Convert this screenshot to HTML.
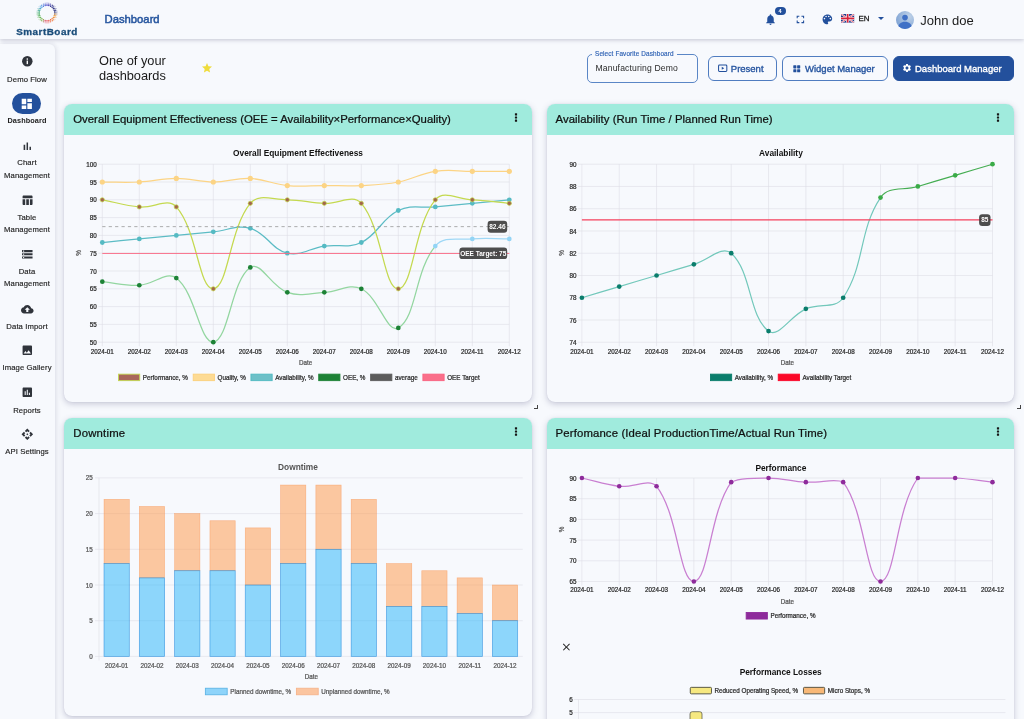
<!DOCTYPE html>
<html lang="en"><head><meta charset="utf-8"><title>SmartBoard - Dashboard</title>
<style>
*{box-sizing:border-box}
html,body{margin:0;padding:0}
body{width:1024px;height:719px;overflow:hidden;background:#f7f9fd;font-family:"Liberation Sans",sans-serif;color:#222;position:relative}
#root{position:absolute;left:0;top:0;width:1024px;height:719px;overflow:hidden;will-change:transform}
.abs{position:absolute}
#hdr{position:absolute;left:0;top:0;width:1024px;height:39px;background:#f7f9fd;box-shadow:0 1px 4px rgba(60,60,100,.28);z-index:5}
#side{position:absolute;left:0;top:43.6px;width:54.5px;height:680px;background:#f7f9fd;border-radius:0 6px 0 0;box-shadow:1px 0 5px rgba(60,60,100,.16);z-index:4}
.sb{position:absolute;left:0;width:54px;text-align:center;font-size:7.7px;line-height:13px;color:#222;letter-spacing:.1px;-webkit-text-stroke:.15px #222}
.sbi{position:absolute;left:0;width:54px;text-align:center}
.card{position:absolute;background:#f7f9fd;border-radius:8px;box-shadow:0 2px 6px rgba(60,60,110,.26),0 0 1px rgba(60,60,110,.2);overflow:hidden}
.ch{position:absolute;left:0;top:0;right:0;height:31px;background:#a0ebdd}
.ct{position:absolute;left:9px;top:0;line-height:30px;font-size:11.35px;color:#101010;white-space:nowrap;-webkit-text-stroke:.24px #101010}
.dots{position:absolute;left:449.7px;top:9px}
.btn{position:absolute;top:56px;height:25px;border:1px solid #4f7cc0;border-radius:6px;color:#25549f;font-size:9.5px;line-height:23px;white-space:nowrap;-webkit-text-stroke:.35px #25549f}
.med{-webkit-text-stroke:.3px currentColor}
svg{display:block;overflow:visible}
svg text{font-family:"Liberation Sans",sans-serif}
</style></head><body><div id="root">

<div id="hdr">
  <div class="abs" style="left:35px;top:1px"><svg width="24" height="24" viewBox="0 0 24 24"><circle cx="12.00" cy="4.30" r="0.72" fill="rgb(70, 60, 200)" opacity="1.0"/><circle cx="13.84" cy="4.52" r="0.72" fill="rgb(54, 50, 172)" opacity="1.0"/><circle cx="15.58" cy="5.18" r="0.72" fill="rgb(39, 39, 145)" opacity="1.0"/><circle cx="17.11" cy="6.24" r="0.72" fill="rgb(25, 30, 120)" opacity="1.0"/><circle cx="18.34" cy="7.63" r="0.72" fill="rgb(25, 30, 117)" opacity="1.0"/><circle cx="19.20" cy="9.27" r="0.72" fill="rgb(25, 30, 114)" opacity="1.0"/><circle cx="19.64" cy="11.07" r="0.72" fill="rgb(25, 30, 110)" opacity="1.0"/><circle cx="19.64" cy="12.93" r="0.72" fill="rgb(153, 102, 62)" opacity="1.0"/><circle cx="19.20" cy="14.73" r="0.72" fill="rgb(240, 144, 31)" opacity="1.0"/><circle cx="18.34" cy="16.37" r="0.72" fill="rgb(239, 128, 34)" opacity="1.0"/><circle cx="17.11" cy="17.76" r="0.72" fill="rgb(239, 113, 37)" opacity="1.0"/><circle cx="15.58" cy="18.82" r="0.72" fill="rgb(238, 98, 44)" opacity="1.0"/><circle cx="13.84" cy="19.48" r="0.72" fill="rgb(236, 88, 68)" opacity="1.0"/><circle cx="12.00" cy="19.70" r="0.72" fill="rgb(234, 78, 92)" opacity="1.0"/><circle cx="10.16" cy="19.48" r="0.72" fill="rgb(215, 87, 102)" opacity="1.0"/><circle cx="8.42" cy="18.82" r="0.72" fill="rgb(153, 148, 75)" opacity="1.0"/><circle cx="6.89" cy="17.76" r="0.72" fill="rgb(110, 178, 62)" opacity="1.0"/><circle cx="5.66" cy="16.37" r="0.72" fill="rgb(90, 174, 67)" opacity="1.0"/><circle cx="4.80" cy="14.73" r="0.72" fill="rgb(70, 171, 72)" opacity="1.0"/><circle cx="4.36" cy="12.93" r="0.72" fill="rgb(50, 167, 77)" opacity="1.0"/><circle cx="4.36" cy="11.07" r="0.72" fill="rgb(45, 164, 103)" opacity="1.0"/><circle cx="4.80" cy="9.27" r="0.72" fill="rgb(54, 163, 149)" opacity="1.0"/><circle cx="5.66" cy="7.63" r="0.72" fill="rgb(63, 161, 195)" opacity="1.0"/><circle cx="6.89" cy="6.24" r="0.72" fill="rgb(70, 152, 228)" opacity="1.0"/><circle cx="8.42" cy="5.18" r="0.72" fill="rgb(70, 122, 218)" opacity="1.0"/><circle cx="10.16" cy="4.52" r="0.72" fill="rgb(70, 91, 209)" opacity="1.0"/><circle cx="12.00" cy="3.00" r="0.62" fill="rgb(70, 60, 200)" opacity="0.95"/><circle cx="13.87" cy="3.20" r="0.62" fill="rgb(56, 51, 176)" opacity="0.95"/><circle cx="15.66" cy="3.78" r="0.62" fill="rgb(43, 42, 152)" opacity="0.95"/><circle cx="17.29" cy="4.72" r="0.62" fill="rgb(30, 33, 128)" opacity="0.95"/><circle cx="18.69" cy="5.98" r="0.62" fill="rgb(25, 30, 118)" opacity="0.95"/><circle cx="19.79" cy="7.50" r="0.62" fill="rgb(25, 30, 116)" opacity="0.95"/><circle cx="20.56" cy="9.22" r="0.62" fill="rgb(25, 30, 113)" opacity="0.95"/><circle cx="20.95" cy="11.06" r="0.62" fill="rgb(25, 30, 110)" opacity="0.95"/><circle cx="20.95" cy="12.94" r="0.62" fill="rgb(143, 96, 66)" opacity="0.95"/><circle cx="20.56" cy="14.78" r="0.62" fill="rgb(240, 147, 31)" opacity="0.95"/><circle cx="19.79" cy="16.50" r="0.62" fill="rgb(239, 133, 33)" opacity="0.95"/><circle cx="18.69" cy="18.02" r="0.62" fill="rgb(239, 120, 36)" opacity="0.95"/><circle cx="17.29" cy="19.28" r="0.62" fill="rgb(238, 107, 39)" opacity="0.95"/><circle cx="15.66" cy="20.22" r="0.62" fill="rgb(237, 96, 50)" opacity="0.95"/><circle cx="13.87" cy="20.80" r="0.62" fill="rgb(235, 86, 72)" opacity="0.95"/><circle cx="12.00" cy="21.00" r="0.62" fill="rgb(234, 78, 92)" opacity="0.95"/><circle cx="10.13" cy="20.80" r="0.62" fill="rgb(223, 79, 106)" opacity="0.95"/><circle cx="8.34" cy="20.22" r="0.62" fill="rgb(169, 132, 82)" opacity="0.95"/><circle cx="6.71" cy="19.28" r="0.62" fill="rgb(119, 180, 60)" opacity="0.95"/><circle cx="5.31" cy="18.02" r="0.62" fill="rgb(101, 176, 65)" opacity="0.95"/><circle cx="4.21" cy="16.50" r="0.62" fill="rgb(84, 173, 69)" opacity="0.95"/><circle cx="3.44" cy="14.78" r="0.62" fill="rgb(66, 170, 73)" opacity="0.95"/><circle cx="3.05" cy="12.94" r="0.62" fill="rgb(49, 167, 78)" opacity="0.95"/><circle cx="3.05" cy="11.06" r="0.62" fill="rgb(44, 164, 100)" opacity="0.95"/><circle cx="3.44" cy="9.22" r="0.62" fill="rgb(52, 163, 140)" opacity="0.95"/><circle cx="4.21" cy="7.50" r="0.62" fill="rgb(60, 162, 180)" opacity="0.95"/><circle cx="5.31" cy="5.98" r="0.62" fill="rgb(68, 160, 220)" opacity="0.95"/><circle cx="6.71" cy="4.72" r="0.62" fill="rgb(70, 140, 224)" opacity="0.95"/><circle cx="8.34" cy="3.78" r="0.62" fill="rgb(70, 113, 216)" opacity="0.95"/><circle cx="10.13" cy="3.20" r="0.62" fill="rgb(70, 87, 208)" opacity="0.95"/><circle cx="12.00" cy="1.80" r="0.45" fill="rgb(70, 60, 200)" opacity="0.6"/><circle cx="13.87" cy="1.97" r="0.45" fill="rgb(58, 52, 179)" opacity="0.6"/><circle cx="15.68" cy="2.49" r="0.45" fill="rgb(46, 44, 158)" opacity="0.6"/><circle cx="17.37" cy="3.33" r="0.45" fill="rgb(34, 36, 136)" opacity="0.6"/><circle cx="18.87" cy="4.46" r="0.45" fill="rgb(25, 30, 119)" opacity="0.6"/><circle cx="20.14" cy="5.85" r="0.45" fill="rgb(25, 30, 117)" opacity="0.6"/><circle cx="21.13" cy="7.45" r="0.45" fill="rgb(25, 30, 115)" opacity="0.6"/><circle cx="21.81" cy="9.21" r="0.45" fill="rgb(25, 30, 112)" opacity="0.6"/><circle cx="22.16" cy="11.06" r="0.45" fill="rgb(25, 30, 110)" opacity="0.6"/><circle cx="22.16" cy="12.94" r="0.45" fill="rgb(136, 92, 69)" opacity="0.6"/><circle cx="21.81" cy="14.79" r="0.45" fill="rgb(240, 149, 30)" opacity="0.6"/><circle cx="21.13" cy="16.55" r="0.45" fill="rgb(239, 137, 33)" opacity="0.6"/><circle cx="20.14" cy="18.15" r="0.45" fill="rgb(239, 125, 35)" opacity="0.6"/><circle cx="18.87" cy="19.54" r="0.45" fill="rgb(239, 114, 37)" opacity="0.6"/><circle cx="17.37" cy="20.67" r="0.45" fill="rgb(238, 102, 40)" opacity="0.6"/><circle cx="15.68" cy="21.51" r="0.45" fill="rgb(237, 93, 55)" opacity="0.6"/><circle cx="13.87" cy="22.03" r="0.45" fill="rgb(235, 85, 74)" opacity="0.6"/><circle cx="12.00" cy="22.20" r="0.45" fill="rgb(234, 78, 92)" opacity="0.6"/><circle cx="10.13" cy="22.03" r="0.45" fill="rgb(229, 73, 109)" opacity="0.6"/><circle cx="8.32" cy="21.51" r="0.45" fill="rgb(182, 119, 88)" opacity="0.6"/><circle cx="6.63" cy="20.67" r="0.45" fill="rgb(134, 166, 66)" opacity="0.6"/><circle cx="5.13" cy="19.54" r="0.45" fill="rgb(109, 178, 63)" opacity="0.6"/><circle cx="3.86" cy="18.15" r="0.45" fill="rgb(94, 175, 67)" opacity="0.6"/><circle cx="2.87" cy="16.55" r="0.45" fill="rgb(79, 172, 70)" opacity="0.6"/><circle cx="2.19" cy="14.79" r="0.45" fill="rgb(63, 169, 74)" opacity="0.6"/><circle cx="1.84" cy="12.94" r="0.45" fill="rgb(48, 166, 78)" opacity="0.6"/><circle cx="1.84" cy="11.06" r="0.45" fill="rgb(44, 164, 98)" opacity="0.6"/><circle cx="2.19" cy="9.21" r="0.45" fill="rgb(51, 163, 133)" opacity="0.6"/><circle cx="2.87" cy="7.45" r="0.45" fill="rgb(58, 162, 168)" opacity="0.6"/><circle cx="3.86" cy="5.85" r="0.45" fill="rgb(65, 161, 204)" opacity="0.6"/><circle cx="5.13" cy="4.46" r="0.45" fill="rgb(70, 154, 228)" opacity="0.6"/><circle cx="6.63" cy="3.33" r="0.45" fill="rgb(70, 131, 221)" opacity="0.6"/><circle cx="8.32" cy="2.49" r="0.45" fill="rgb(70, 107, 214)" opacity="0.6"/><circle cx="10.13" cy="1.97" r="0.45" fill="rgb(70, 84, 207)" opacity="0.6"/></svg></div>
  <div class="abs" style="left:15px;top:26px;width:64px;text-align:center;font-weight:bold;font-size:9.9px;line-height:12px;color:#1a4d7a;letter-spacing:.5px;-webkit-text-stroke:.32px #1a4d7a">SmartBoard</div>
  <div class="abs" style="left:104.6px;top:12px;font-size:11.25px;line-height:14px;color:#27569f;-webkit-text-stroke:.5px #27569f">Dashboard</div>
  <div class="abs" style="left:764px;top:12.5px"><svg width="13" height="13" viewBox="0 0 24 24"><path fill="#23509c" d="M12 22c1.1 0 2-.9 2-2h-4c0 1.1.89 2 2 2zm6-6v-5c0-3.07-1.64-5.64-4.5-6.32V4c0-.83-.67-1.5-1.5-1.5s-1.5.67-1.5 1.5v.68C7.63 5.36 6 7.92 6 11v5l-2 2v1h16v-1l-2-2z"/></svg></div>
  <div class="abs" style="left:774.5px;top:7.4px;width:11px;height:8px;border-radius:4px;background:#23509c;color:#fff;font-size:5.5px;line-height:8px;text-align:center;font-weight:bold">4</div>
  <div class="abs" style="left:793.6px;top:12.8px"><svg width="12.8" height="12.8" viewBox="0 0 24 24"><path fill="#23509c" d="M7 14H5v5h5v-2H7v-3zm-2-4h2V7h3V5H5v5zm12 7h-3v2h5v-5h-2v3zM14 5v2h3v3h2V5h-5z"/></svg></div>
  <div class="abs" style="left:820.7px;top:12.6px"><svg width="12.8" height="12.8" viewBox="0 0 24 24"><path fill="#23509c" d="M12 3c-4.97 0-9 4.03-9 9s4.03 9 9 9c.83 0 1.5-.67 1.5-1.5 0-.39-.15-.74-.39-1.01-.23-.26-.38-.61-.38-.99 0-.83.67-1.5 1.5-1.5H16c2.76 0 5-2.24 5-5 0-4.42-4.03-8-9-8zm-5.500 9c-.83 0-1.500-.67-1.500-1.500S5.670 9 6.500 9 8 9.670 8 10.500 7.330 12 6.500 12zm3-4C8.670 8 8 7.330 8 6.500S8.670 5 9.500 5s1.500.67 1.500 1.500S10.330 8 9.500 8zm5 0c-.83 0-1.500-.67-1.500-1.500S13.670 5 14.500 5s1.500.67 1.500 1.500S15.330 8 14.500 8zm3 4c-.83 0-1.500-.67-1.500-1.500S16.670 9 17.500 9s1.500.67 1.500 1.500-.67 1.500-1.500 1.500z"/></svg></div>
  <div class="abs" style="left:841px;top:13.9px"><svg width="13.4" height="8.8" viewBox="0 0 60 40" preserveAspectRatio="none"><defs><clipPath id="fk"><rect width="60" height="40" rx="3"/></clipPath></defs><g clip-path="url(#fk)"><rect width="60" height="40" fill="#1f3a8a"/><path d="M0 0L60 40M60 0L0 40" stroke="#fff" stroke-width="8"/><path d="M0 0L60 40M60 0L0 40" stroke="#d8203a" stroke-width="3"/><path d="M30 0V40M0 20H60" stroke="#fff" stroke-width="13"/><path d="M30 0V40M0 20H60" stroke="#d8203a" stroke-width="7.5"/></g></svg></div>
  <div class="abs" style="left:858.5px;top:13px;font-size:7.9px;line-height:11px;color:#222;-webkit-text-stroke:.3px #222">EN</div>
  <div class="abs" style="left:878px;top:17px;width:0;height:0;border-left:3px solid transparent;border-right:3px solid transparent;border-top:3.2px solid #23509c"></div>
  <div class="abs" style="left:896.2px;top:10.8px"><svg width="18" height="18" viewBox="0 0 36 36"><defs><clipPath id="avc"><circle cx="18" cy="18" r="18"/></clipPath><radialGradient id="avg" cx="0.72" cy="0.3" r="0.8"><stop offset="0" stop-color="#bfd2e8"/><stop offset="1" stop-color="#7fa3d4"/></radialGradient></defs><circle cx="18" cy="18" r="18" fill="url(#avg)"/><g clip-path="url(#avc)"><circle cx="18" cy="13.200" r="5.600" fill="#3f70c6"/><path d="M3.500 37c0-11 6.500-15.500 14.500-15.500s14.500 4.500 14.500 15.500z" fill="#3f70c6"/></g></svg></div>
  <div class="abs" style="left:920.3px;top:12.6px;font-size:13px;line-height:16px;color:#1c1c1c">John doe</div>
</div>
<div id="side">
<div class="abs" style="left:20.5px;top:11.9px"><svg width="12.6" height="12.6" viewBox="0 0 24 24"><circle cx="12" cy="12" r="10" fill="#30343b"/><rect x="10.700" y="10.600" width="2.600" height="6.800" fill="#fff"/><rect x="10.700" y="6.400" width="2.600" height="2.600" fill="#fff"/></svg></div>
<div class="sb" style="top:29.4px;">Demo Flow</div>
<div class="abs" style="left:12px;top:49.5px;width:29px;height:21px;border-radius:11px;background:#23509c"></div>
<div class="abs" style="left:20.1px;top:53.2px"><svg width="13.6" height="13.6" viewBox="0 0 24 24"><path fill="#fff" d="M3 13h8V3H3v10zm0 8h8v-6H3v6zm10 0h8V11h-8v10zm0-18v6h8V3h-8z"/></svg></div>
<div class="sb" style="top:70.3px;font-weight:bold;font-size:7.3px;-webkit-text-stroke:0;">Dashboard</div>
<div class="abs" style="left:20.5px;top:96.0px"><svg width="12.6" height="12.6" viewBox="0 0 24 24"><path fill="#30343b" d="M5 9.2h3V19H5V9.2zM10.6 5h2.8v14h-2.8V5zm5.6 8H19v6h-2.8v-6z"/></svg></div>
<div class="sb" style="top:112.8px;">Chart</div>
<div class="sb" style="top:125.9px;">Management</div>
<div class="abs" style="left:20.5px;top:150.3px"><svg width="12.6" height="12.6" viewBox="0 0 24 24"><path fill="#30343b" d="M10 10.02h5V21h-5zM17 21h3c1.1 0 2-.9 2-2v-9h-5v11zm3-18H5c-1.1 0-2 .9-2 2v3h19V5c0-1.1-.9-2-2-2zM3 19c0 1.1.9 2 2 2h3V10H3v9z"/></svg></div>
<div class="sb" style="top:167.0px;">Table</div>
<div class="sb" style="top:179.8px;">Management</div>
<div class="abs" style="left:20.5px;top:204.3px"><svg width="12.6" height="12.6" viewBox="0 0 24 24"><path fill="#30343b" d="M2 20h20v-4H2v4zm2-3h2v2H4v-2zM2 4v4h20V4H2zm4 3H4V5h2v2zm-4 7h20v-4H2v4zm2-3h2v2H4v-2z"/></svg></div>
<div class="sb" style="top:221.8px;">Data</div>
<div class="sb" style="top:233.8px;">Management</div>
<div class="abs" style="left:20.5px;top:259.3px"><svg width="12.6" height="12.6" viewBox="0 0 24 24"><path fill="#30343b" d="M19.35 10.04C18.67 6.59 15.64 4 12 4 9.11 4 6.6 5.64 5.35 8.04 2.34 8.36 0 10.91 0 14c0 3.31 2.69 6 6 6h13c2.76 0 5-2.24 5-5 0-2.64-2.05-4.78-4.65-4.96zM14 13v4h-4v-4H7l5-5 5 5h-3z"/></svg></div>
<div class="sb" style="top:276.2px;">Data Import</div>
<div class="abs" style="left:20.5px;top:300.3px"><svg width="12.6" height="12.6" viewBox="0 0 24 24"><path fill="#30343b" d="M21 19V5c0-1.1-.9-2-2-2H5c-1.1 0-2 .9-2 2v14c0 1.1.9 2 2 2h14c1.1 0 2-.9 2-2zM8.5 13.5l2.5 3.01L14.5 12l4.5 6H5l3.5-4.5z"/></svg></div>
<div class="sb" style="top:317.9px;">Image Gallery</div>
<div class="abs" style="left:20.5px;top:342.5px"><svg width="12.6" height="12.6" viewBox="0 0 24 24"><path fill="#30343b" d="M19 3H5c-1.1 0-2 .9-2 2v14c0 1.1.9 2 2 2h14c1.1 0 2-.9 2-2V5c0-1.1-.9-2-2-2zM9 17H7v-7h2v7zm4 0h-2V7h2v10zm4 0h-2v-4h2v4z"/></svg></div>
<div class="sb" style="top:360.0px;">Reports</div>
<div class="abs" style="left:20.5px;top:384.3px"><svg width="12.6" height="12.6" viewBox="0 0 24 24"><path fill="#30343b" d="M14 12l-2 2-2-2 2-2 2 2zm-2-6l2.12 2.12 2.5-2.5L12 1 7.38 5.62l2.5 2.5L12 6zm-6 6l2.12-2.12-2.5-2.5L1 12l4.62 4.62 2.5-2.5L6 12zm12 0l-2.12 2.12 2.5 2.5L23 12l-4.62-4.62-2.5 2.5L18 12zm-6 6l-2.12-2.12-2.5 2.5L12 23l4.62-4.62-2.5-2.5L12 18z"/></svg></div>
<div class="sb" style="top:401.7px;">API Settings</div>
</div>

<div class="abs" style="left:99px;top:53px;font-size:12.8px;line-height:15px;color:#1a1a1a">One of your<br>dashboards</div>
<div class="abs" style="left:200.7px;top:62.2px"><svg width="12" height="12" viewBox="0 0 24 24"><path fill="#efdc3c" d="M12 17.27L18.18 21l-1.64-7.03L22 9.24l-7.19-.61L12 2 9.19 8.63 2 9.24l5.46 4.73L5.82 21z"/></svg></div>
<div class="abs" style="left:587px;top:54px;width:111px;height:29px;border:1px solid #5a86c6;border-radius:5px"></div>
<div class="abs" style="left:592px;top:50px;height:8px;padding:0 3px;background:#f7f9fd;font-size:6.4px;line-height:8px;color:#2f62b4;white-space:nowrap;letter-spacing:.12px;-webkit-text-stroke:.15px #2f62b4">Select Favorite Dashboard</div>
<div class="abs" style="left:595.5px;top:62px;font-size:8.6px;line-height:12px;color:#2b2b2b;white-space:nowrap;letter-spacing:.15px">Manufacturing Demo</div>
<div class="btn" style="left:708px;width:69px"><span class="abs" style="left:8.6px;top:7px"><svg width="9.400" height="8.460" viewBox="0 0 10 9"><rect x="0.6" y="1.1" width="8.8" height="6.8" rx="0.9" fill="none" stroke="#23509c" stroke-width="1.1"/><path d="M4 3v3l2.600-1.500z" fill="#23509c"/></svg></span><span class="abs" style="left:21.8px;top:0">Present</span></div>
<div class="btn" style="left:782px;width:106px"><span class="abs" style="left:9.5px;top:8px"><svg width="7.500" height="7.500" viewBox="0 0 8 8"><rect x="0.3" y="0.3" width="3.300" height="3.300" rx="0.600" fill="#23509c"/><rect x="0.3" y="4.4" width="3.300" height="3.300" rx="0.600" fill="#23509c"/><rect x="4.4" y="0.3" width="3.300" height="3.300" rx="0.600" fill="#23509c"/><rect x="4.4" y="4.4" width="3.300" height="3.300" rx="0.600" fill="#23509c"/></svg></span><span class="abs" style="left:22px;top:0">Widget Manager</span></div>
<div class="btn" style="left:893px;width:121px;background:#23509c;border-color:#23509c;color:#fff;-webkit-text-stroke:.35px #fff"><span class="abs" style="left:7.6px;top:6.3px"><svg width="10" height="10" viewBox="0 0 24 24"><path fill="#fff" d="M19.14 12.94c.04-.3.06-.61.06-.94 0-.32-.02-.64-.07-.94l2.030-1.580c.18-.14.23-.41.12-.61l-1.920-3.320c-.12-.22-.37-.29-.59-.22l-2.390.96c-.5-.38-1.030-.7-1.620-.94l-.36-2.540c-.04-.24-.24-.41-.48-.41h-3.840c-.24 0-.43.17-.47.41l-.36 2.540c-.59.24-1.130.57-1.620.94l-2.390-.96c-.22-.08-.47 0-.59.22L2.740 8.870c-.12.21-.08.47.12.61l2.030 1.580c-.05.3-.09.63-.09.94s.02.64.07.94l-2.030 1.580c-.18.14-.23.41-.12.61l1.920 3.320c.12.22.37.29.59.22l2.390-.96c.5.38 1.030.7 1.620.94l.36 2.540c.05.24.24.41.48.41h3.840c.24 0 .44-.17.47-.41l.36-2.540c.59-.24 1.130-.56 1.620-.94l2.390.96c.22.08.47 0 .59-.22l1.920-3.320c.12-.22.07-.47-.12-.61l-2.010-1.580zM12 15.600c-1.980 0-3.600-1.620-3.600-3.600s1.620-3.600 3.600-3.600 3.600 1.620 3.600 3.600-1.620 3.600-3.600 3.600z"/></svg></span><span class="abs" style="left:21px;top:0">Dashboard Manager</span></div>

<div class="card" style="left:64.3px;top:104px;width:467.4px;height:298px"><div class="ch"><div class="ct" style="letter-spacing:0px">Overall Equipment Effectiveness (OEE = Availability×Performance×Quality)</div><div class="dots"><svg width="4" height="10" viewBox="0 0 4 10"><rect x="0.900" y="0.3" width="2.200" height="2.200" rx="0.500" fill="#161616"/><rect x="0.900" y="3.4" width="2.200" height="2.200" rx="0.500" fill="#161616"/><rect x="0.900" y="6.5" width="2.200" height="2.200" rx="0.500" fill="#161616"/></svg></div></div><svg class="abs" style="left:0;top:0" width="468" height="330"><g transform="translate(-64.3,-104)"><text x="298.30" y="156.41" font-size="8.35" text-anchor="middle" fill="#111" font-weight="bold">Overall Equipment Effectiveness</text><path d="M98.60 164.20H509.60" stroke="#dddde6" stroke-width="0.6"/><path d="M98.60 182.00H509.60" stroke="#dddde6" stroke-width="0.6"/><path d="M98.60 199.80H509.60" stroke="#dddde6" stroke-width="0.6"/><path d="M98.60 217.60H509.60" stroke="#dddde6" stroke-width="0.6"/><path d="M98.60 235.40H509.60" stroke="#dddde6" stroke-width="0.6"/><path d="M98.60 253.20H509.60" stroke="#dddde6" stroke-width="0.6"/><path d="M98.60 271.00H509.60" stroke="#dddde6" stroke-width="0.6"/><path d="M98.60 288.80H509.60" stroke="#dddde6" stroke-width="0.6"/><path d="M98.60 306.60H509.60" stroke="#dddde6" stroke-width="0.6"/><path d="M98.60 324.40H509.60" stroke="#dddde6" stroke-width="0.6"/><path d="M98.60 342.20H509.60" stroke="#dddde6" stroke-width="0.6"/><path d="M102.60 164.20V346.20" stroke="#dddde6" stroke-width="0.6"/><path d="M139.60 164.20V346.20" stroke="#dddde6" stroke-width="0.6"/><path d="M176.60 164.20V346.20" stroke="#dddde6" stroke-width="0.6"/><path d="M213.60 164.20V346.20" stroke="#dddde6" stroke-width="0.6"/><path d="M250.60 164.20V346.20" stroke="#dddde6" stroke-width="0.6"/><path d="M287.60 164.20V346.20" stroke="#dddde6" stroke-width="0.6"/><path d="M324.60 164.20V346.20" stroke="#dddde6" stroke-width="0.6"/><path d="M361.60 164.20V346.20" stroke="#dddde6" stroke-width="0.6"/><path d="M398.60 164.20V346.20" stroke="#dddde6" stroke-width="0.6"/><path d="M435.60 164.20V346.20" stroke="#dddde6" stroke-width="0.6"/><path d="M472.60 164.20V346.20" stroke="#dddde6" stroke-width="0.6"/><path d="M509.60 164.20V346.20" stroke="#dddde6" stroke-width="0.6"/><text x="97.00" y="166.77" font-size="6.3" text-anchor="end" fill="#2a2a2a" stroke="#2a2a2a" stroke-width="0.22">100</text><text x="97.00" y="184.57" font-size="6.3" text-anchor="end" fill="#2a2a2a" stroke="#2a2a2a" stroke-width="0.22">95</text><text x="97.00" y="202.37" font-size="6.3" text-anchor="end" fill="#2a2a2a" stroke="#2a2a2a" stroke-width="0.22">90</text><text x="97.00" y="220.17" font-size="6.3" text-anchor="end" fill="#2a2a2a" stroke="#2a2a2a" stroke-width="0.22">85</text><text x="97.00" y="237.97" font-size="6.3" text-anchor="end" fill="#2a2a2a" stroke="#2a2a2a" stroke-width="0.22">80</text><text x="97.00" y="255.77" font-size="6.3" text-anchor="end" fill="#2a2a2a" stroke="#2a2a2a" stroke-width="0.22">75</text><text x="97.00" y="273.57" font-size="6.3" text-anchor="end" fill="#2a2a2a" stroke="#2a2a2a" stroke-width="0.22">70</text><text x="97.00" y="291.37" font-size="6.3" text-anchor="end" fill="#2a2a2a" stroke="#2a2a2a" stroke-width="0.22">65</text><text x="97.00" y="309.17" font-size="6.3" text-anchor="end" fill="#2a2a2a" stroke="#2a2a2a" stroke-width="0.22">60</text><text x="97.00" y="326.97" font-size="6.3" text-anchor="end" fill="#2a2a2a" stroke="#2a2a2a" stroke-width="0.22">55</text><text x="97.00" y="344.77" font-size="6.3" text-anchor="end" fill="#2a2a2a" stroke="#2a2a2a" stroke-width="0.22">50</text><text x="102.60" y="354.17" font-size="6.3" text-anchor="middle" fill="#2a2a2a" stroke="#2a2a2a" stroke-width="0.22">2024-01</text><text x="139.60" y="354.17" font-size="6.3" text-anchor="middle" fill="#2a2a2a" stroke="#2a2a2a" stroke-width="0.22">2024-02</text><text x="176.60" y="354.17" font-size="6.3" text-anchor="middle" fill="#2a2a2a" stroke="#2a2a2a" stroke-width="0.22">2024-03</text><text x="213.60" y="354.17" font-size="6.3" text-anchor="middle" fill="#2a2a2a" stroke="#2a2a2a" stroke-width="0.22">2024-04</text><text x="250.60" y="354.17" font-size="6.3" text-anchor="middle" fill="#2a2a2a" stroke="#2a2a2a" stroke-width="0.22">2024-05</text><text x="287.60" y="354.17" font-size="6.3" text-anchor="middle" fill="#2a2a2a" stroke="#2a2a2a" stroke-width="0.22">2024-06</text><text x="324.60" y="354.17" font-size="6.3" text-anchor="middle" fill="#2a2a2a" stroke="#2a2a2a" stroke-width="0.22">2024-07</text><text x="361.60" y="354.17" font-size="6.3" text-anchor="middle" fill="#2a2a2a" stroke="#2a2a2a" stroke-width="0.22">2024-08</text><text x="398.60" y="354.17" font-size="6.3" text-anchor="middle" fill="#2a2a2a" stroke="#2a2a2a" stroke-width="0.22">2024-09</text><text x="435.60" y="354.17" font-size="6.3" text-anchor="middle" fill="#2a2a2a" stroke="#2a2a2a" stroke-width="0.22">2024-10</text><text x="472.60" y="354.17" font-size="6.3" text-anchor="middle" fill="#2a2a2a" stroke="#2a2a2a" stroke-width="0.22">2024-11</text><text x="509.60" y="354.17" font-size="6.3" text-anchor="middle" fill="#2a2a2a" stroke="#2a2a2a" stroke-width="0.22">2024-12</text><text x="79.00" y="255.27" font-size="6.3" text-anchor="middle" fill="#555" stroke="#555" stroke-width="0.22" transform="rotate(-90 79 253)">%</text><text x="306.00" y="364.57" font-size="6.3" text-anchor="middle" fill="#555" stroke="#555" stroke-width="0.22">Date</text><path d="M102.60 281.68C117.40 283.10 124.90 285.95 139.60 285.24C154.50 284.52 166.61 270.43 176.60 278.12C196.21 293.22 199.69 342.20 213.60 342.20C229.29 339.94 231.31 280.43 250.60 267.44C260.91 260.49 271.42 286.91 287.60 292.36C301.02 296.88 309.83 293.07 324.60 292.36C339.43 291.65 349.52 282.99 361.60 288.80C379.12 297.23 387.50 334.37 398.60 327.96C417.10 317.28 414.75 271.16 435.60 246.08" fill="none" stroke="#93d6a0" stroke-width="1.25"/><path d="M435.60 246.08C444.35 235.56 457.67 240.40 472.60 238.96C487.27 237.55 494.80 238.96 509.60 238.96" fill="none" stroke="#9fd8f6" stroke-width="1.25"/><path d="M102.60 242.52C117.40 241.10 124.80 240.38 139.60 238.96C154.40 237.54 161.80 236.82 176.60 235.40C191.40 233.98 198.80 233.26 213.60 231.84C228.40 230.42 237.15 224.40 250.60 228.28C266.75 232.94 271.55 249.34 287.60 253.20C301.15 256.46 309.70 248.23 324.60 246.08C339.30 243.96 348.82 248.67 361.60 242.52C378.42 234.43 381.78 218.57 398.60 210.48C411.38 204.33 420.80 208.34 435.60 206.92C450.40 205.50 457.80 204.78 472.60 203.36C487.40 201.94 494.80 201.22 509.60 199.80" fill="none" stroke="#5cbcc5" stroke-width="1.25"/><path d="M102.60 182.00C117.40 182.00 124.83 182.71 139.60 182.00C154.43 181.29 161.80 178.44 176.60 178.44C191.40 178.44 198.80 182.00 213.60 182.00C228.40 182.00 235.90 177.73 250.60 178.44C265.50 179.16 272.67 184.12 287.60 185.56C302.27 186.97 309.80 185.56 324.60 185.56C339.40 185.56 346.83 186.27 361.60 185.56C376.43 184.85 384.06 184.80 398.60 182.00C413.66 179.10 420.50 173.50 435.60 171.32C450.10 169.23 457.80 171.32 472.60 171.32C487.40 171.32 494.80 171.32 509.60 171.32" fill="none" stroke="#fcd485" stroke-width="1.25"/><path d="M102.60 199.80C117.40 202.65 124.67 205.48 139.60 206.92C154.27 208.33 167.97 197.37 176.60 206.92C197.57 230.12 199.06 289.50 213.60 288.80C228.66 288.08 229.45 228.80 250.60 203.36C259.05 193.20 272.80 199.80 287.60 199.80C302.40 199.80 309.77 202.65 324.60 203.36C339.37 204.07 353.18 193.64 361.60 203.36C382.78 227.82 384.06 289.50 398.60 288.80C413.66 288.08 414.21 225.52 435.60 199.80C443.81 189.92 457.83 199.09 472.60 199.80C487.43 200.51 494.80 201.94 509.60 203.36" fill="none" stroke="#c4d94f" stroke-width="1.25"/><circle cx="102.60" cy="281.68" r="2.35" fill="#1d8236"/><circle cx="139.60" cy="285.24" r="2.35" fill="#1d8236"/><circle cx="176.60" cy="278.12" r="2.35" fill="#1d8236"/><circle cx="213.60" cy="342.20" r="2.35" fill="#1d8236"/><circle cx="250.60" cy="267.44" r="2.35" fill="#1d8236"/><circle cx="287.60" cy="292.36" r="2.35" fill="#1d8236"/><circle cx="324.60" cy="292.36" r="2.35" fill="#1d8236"/><circle cx="361.60" cy="288.80" r="2.35" fill="#1d8236"/><circle cx="398.60" cy="327.96" r="2.35" fill="#1d8236"/><circle cx="435.60" cy="246.08" r="2.35" fill="#93d4f5"/><circle cx="472.60" cy="238.96" r="2.35" fill="#93d4f5"/><circle cx="509.60" cy="238.96" r="2.35" fill="#93d4f5"/><circle cx="102.60" cy="242.52" r="2.4" fill="#55bac3"/><circle cx="139.60" cy="238.96" r="2.4" fill="#55bac3"/><circle cx="176.60" cy="235.40" r="2.4" fill="#55bac3"/><circle cx="213.60" cy="231.84" r="2.4" fill="#55bac3"/><circle cx="250.60" cy="228.28" r="2.4" fill="#55bac3"/><circle cx="287.60" cy="253.20" r="2.4" fill="#55bac3"/><circle cx="324.60" cy="246.08" r="2.4" fill="#55bac3"/><circle cx="361.60" cy="242.52" r="2.4" fill="#55bac3"/><circle cx="398.60" cy="210.48" r="2.4" fill="#55bac3"/><circle cx="435.60" cy="206.92" r="2.4" fill="#55bac3"/><circle cx="472.60" cy="203.36" r="2.4" fill="#55bac3"/><circle cx="509.60" cy="199.80" r="2.4" fill="#55bac3"/><circle cx="102.60" cy="182.00" r="2.6" fill="#fcd485"/><circle cx="139.60" cy="182.00" r="2.6" fill="#fcd485"/><circle cx="176.60" cy="178.44" r="2.6" fill="#fcd485"/><circle cx="213.60" cy="182.00" r="2.6" fill="#fcd485"/><circle cx="250.60" cy="178.44" r="2.6" fill="#fcd485"/><circle cx="287.60" cy="185.56" r="2.6" fill="#fcd485"/><circle cx="324.60" cy="185.56" r="2.6" fill="#fcd485"/><circle cx="361.60" cy="185.56" r="2.6" fill="#fcd485"/><circle cx="398.60" cy="182.00" r="2.6" fill="#fcd485"/><circle cx="435.60" cy="171.32" r="2.6" fill="#fcd485"/><circle cx="472.60" cy="171.32" r="2.6" fill="#fcd485"/><circle cx="509.60" cy="171.32" r="2.6" fill="#fcd485"/><circle cx="102.60" cy="199.80" r="2.15" fill="#a3664c" stroke="#c4d94f" stroke-width="0.7"/><circle cx="139.60" cy="206.92" r="2.15" fill="#a3664c" stroke="#c4d94f" stroke-width="0.7"/><circle cx="176.60" cy="206.92" r="2.15" fill="#a3664c" stroke="#c4d94f" stroke-width="0.7"/><circle cx="213.60" cy="288.80" r="2.15" fill="#a3664c" stroke="#c4d94f" stroke-width="0.7"/><circle cx="250.60" cy="203.36" r="2.15" fill="#a3664c" stroke="#c4d94f" stroke-width="0.7"/><circle cx="287.60" cy="199.80" r="2.15" fill="#a3664c" stroke="#c4d94f" stroke-width="0.7"/><circle cx="324.60" cy="203.36" r="2.15" fill="#a3664c" stroke="#c4d94f" stroke-width="0.7"/><circle cx="361.60" cy="203.36" r="2.15" fill="#a3664c" stroke="#c4d94f" stroke-width="0.7"/><circle cx="398.60" cy="288.80" r="2.15" fill="#a3664c" stroke="#c4d94f" stroke-width="0.7"/><circle cx="435.60" cy="199.80" r="2.15" fill="#a3664c" stroke="#c4d94f" stroke-width="0.7"/><circle cx="472.60" cy="199.80" r="2.15" fill="#a3664c" stroke="#c4d94f" stroke-width="0.7"/><circle cx="509.60" cy="203.36" r="2.15" fill="#a3664c" stroke="#c4d94f" stroke-width="0.7"/><path d="M102.6 226.64H509.6" stroke="#8a8a8a" stroke-width="0.7" stroke-dasharray="3.2 3.2"/><path d="M102.6 253.20H509.6" stroke="#f96a86" stroke-width="0.95" transform="translate(0,0.25)"/><rect x="487.90" y="220.84" width="19.6" height="11.8" rx="3.2" fill="#3a3a3a" fill-opacity="0.9"/><text x="497.70" y="229.08" font-size="6.5" text-anchor="middle" fill="#fff" font-weight="bold">82.46</text><rect x="459.70" y="247.50" width="47.8" height="11.6" rx="3.2" fill="#3a3a3a" fill-opacity="0.9"/><text x="483.60" y="255.64" font-size="6.5" text-anchor="middle" fill="#fff" font-weight="bold">OEE Target: 75</text><rect x="118.84" y="374.15" width="21.2" height="6.5" rx="0" fill="#a9685a" stroke="#c4d94f" stroke-width="0.9"/><text x="143.14" y="379.67" font-size="6.3" text-anchor="start" fill="#2a2a2a" stroke="#2a2a2a" stroke-width="0.22">Performance, %</text><rect x="193.51" y="374.15" width="21.2" height="6.5" rx="0" fill="#fddb94" stroke="#fcd07a" stroke-width="0.9"/><text x="217.81" y="379.67" font-size="6.3" text-anchor="start" fill="#2a2a2a" stroke="#2a2a2a" stroke-width="0.22">Quality, %</text><rect x="251.25" y="374.15" width="21.2" height="6.5" rx="0" fill="#6dc0c8" stroke="#4fb9c1" stroke-width="0.9"/><text x="275.55" y="379.67" font-size="6.3" text-anchor="start" fill="#2a2a2a" stroke="#2a2a2a" stroke-width="0.22">Availability, %</text><rect x="319.03" y="374.15" width="21.2" height="6.5" rx="0" fill="#1d8236" stroke="#1d8236" stroke-width="0.9"/><text x="343.33" y="379.67" font-size="6.3" text-anchor="start" fill="#2a2a2a" stroke="#2a2a2a" stroke-width="0.22">OEE, %</text><rect x="370.94" y="374.15" width="21.2" height="6.5" rx="0" fill="#5c5c5c" stroke="#5c5c5c" stroke-width="0.9"/><text x="395.24" y="379.67" font-size="6.3" text-anchor="start" fill="#2a2a2a" stroke="#2a2a2a" stroke-width="0.22">average</text><rect x="423.21" y="374.15" width="21.2" height="6.5" rx="0" fill="#fa6f8a" stroke="#f9617f" stroke-width="0.9"/><text x="447.51" y="379.67" font-size="6.3" text-anchor="start" fill="#2a2a2a" stroke="#2a2a2a" stroke-width="0.22">OEE Target</text></g></svg></div><div class="abs" style="left:534.3px;top:404.8px;width:4px;height:4px;border-right:1px solid #444;border-bottom:1px solid #444"></div>
<div class="card" style="left:546.6px;top:104px;width:467.4px;height:298px"><div class="ch"><div class="ct" style="letter-spacing:0.04px">Availability (Run Time / Planned Run Time)</div><div class="dots"><svg width="4" height="10" viewBox="0 0 4 10"><rect x="0.900" y="0.3" width="2.200" height="2.200" rx="0.500" fill="#161616"/><rect x="0.900" y="3.4" width="2.200" height="2.200" rx="0.500" fill="#161616"/><rect x="0.900" y="6.5" width="2.200" height="2.200" rx="0.500" fill="#161616"/></svg></div></div><svg class="abs" style="left:0;top:0" width="468" height="330"><g transform="translate(-546.6,-104)"><text x="780.50" y="156.41" font-size="8.35" text-anchor="middle" fill="#111" font-weight="bold">Availability</text><path d="M577.50 164.20H992.10" stroke="#dddde6" stroke-width="0.6"/><path d="M577.50 186.46H992.10" stroke="#dddde6" stroke-width="0.6"/><path d="M577.50 208.71H992.10" stroke="#dddde6" stroke-width="0.6"/><path d="M577.50 230.97H992.10" stroke="#dddde6" stroke-width="0.6"/><path d="M577.50 253.22H992.10" stroke="#dddde6" stroke-width="0.6"/><path d="M577.50 275.48H992.10" stroke="#dddde6" stroke-width="0.6"/><path d="M577.50 297.74H992.10" stroke="#dddde6" stroke-width="0.6"/><path d="M577.50 319.99H992.10" stroke="#dddde6" stroke-width="0.6"/><path d="M577.50 342.25H992.10" stroke="#dddde6" stroke-width="0.6"/><path d="M581.50 164.20V346.25" stroke="#dddde6" stroke-width="0.6"/><path d="M618.83 164.20V346.25" stroke="#dddde6" stroke-width="0.6"/><path d="M656.15 164.20V346.25" stroke="#dddde6" stroke-width="0.6"/><path d="M693.48 164.20V346.25" stroke="#dddde6" stroke-width="0.6"/><path d="M730.81 164.20V346.25" stroke="#dddde6" stroke-width="0.6"/><path d="M768.14 164.20V346.25" stroke="#dddde6" stroke-width="0.6"/><path d="M805.46 164.20V346.25" stroke="#dddde6" stroke-width="0.6"/><path d="M842.79 164.20V346.25" stroke="#dddde6" stroke-width="0.6"/><path d="M880.12 164.20V346.25" stroke="#dddde6" stroke-width="0.6"/><path d="M917.45 164.20V346.25" stroke="#dddde6" stroke-width="0.6"/><path d="M954.77 164.20V346.25" stroke="#dddde6" stroke-width="0.6"/><path d="M992.10 164.20V346.25" stroke="#dddde6" stroke-width="0.6"/><text x="576.00" y="166.77" font-size="6.3" text-anchor="end" fill="#2a2a2a" stroke="#2a2a2a" stroke-width="0.22">90</text><text x="576.00" y="189.02" font-size="6.3" text-anchor="end" fill="#2a2a2a" stroke="#2a2a2a" stroke-width="0.22">88</text><text x="576.00" y="211.28" font-size="6.3" text-anchor="end" fill="#2a2a2a" stroke="#2a2a2a" stroke-width="0.22">86</text><text x="576.00" y="233.54" font-size="6.3" text-anchor="end" fill="#2a2a2a" stroke="#2a2a2a" stroke-width="0.22">84</text><text x="576.00" y="255.79" font-size="6.3" text-anchor="end" fill="#2a2a2a" stroke="#2a2a2a" stroke-width="0.22">82</text><text x="576.00" y="278.05" font-size="6.3" text-anchor="end" fill="#2a2a2a" stroke="#2a2a2a" stroke-width="0.22">80</text><text x="576.00" y="300.31" font-size="6.3" text-anchor="end" fill="#2a2a2a" stroke="#2a2a2a" stroke-width="0.22">78</text><text x="576.00" y="322.56" font-size="6.3" text-anchor="end" fill="#2a2a2a" stroke="#2a2a2a" stroke-width="0.22">76</text><text x="576.00" y="344.82" font-size="6.3" text-anchor="end" fill="#2a2a2a" stroke="#2a2a2a" stroke-width="0.22">74</text><text x="581.50" y="354.17" font-size="6.3" text-anchor="middle" fill="#2a2a2a" stroke="#2a2a2a" stroke-width="0.22">2024-01</text><text x="618.83" y="354.17" font-size="6.3" text-anchor="middle" fill="#2a2a2a" stroke="#2a2a2a" stroke-width="0.22">2024-02</text><text x="656.15" y="354.17" font-size="6.3" text-anchor="middle" fill="#2a2a2a" stroke="#2a2a2a" stroke-width="0.22">2024-03</text><text x="693.48" y="354.17" font-size="6.3" text-anchor="middle" fill="#2a2a2a" stroke="#2a2a2a" stroke-width="0.22">2024-04</text><text x="730.81" y="354.17" font-size="6.3" text-anchor="middle" fill="#2a2a2a" stroke="#2a2a2a" stroke-width="0.22">2024-05</text><text x="768.14" y="354.17" font-size="6.3" text-anchor="middle" fill="#2a2a2a" stroke="#2a2a2a" stroke-width="0.22">2024-06</text><text x="805.46" y="354.17" font-size="6.3" text-anchor="middle" fill="#2a2a2a" stroke="#2a2a2a" stroke-width="0.22">2024-07</text><text x="842.79" y="354.17" font-size="6.3" text-anchor="middle" fill="#2a2a2a" stroke="#2a2a2a" stroke-width="0.22">2024-08</text><text x="880.12" y="354.17" font-size="6.3" text-anchor="middle" fill="#2a2a2a" stroke="#2a2a2a" stroke-width="0.22">2024-09</text><text x="917.45" y="354.17" font-size="6.3" text-anchor="middle" fill="#2a2a2a" stroke="#2a2a2a" stroke-width="0.22">2024-10</text><text x="954.77" y="354.17" font-size="6.3" text-anchor="middle" fill="#2a2a2a" stroke="#2a2a2a" stroke-width="0.22">2024-11</text><text x="992.10" y="354.17" font-size="6.3" text-anchor="middle" fill="#2a2a2a" stroke="#2a2a2a" stroke-width="0.22">2024-12</text><text x="561.50" y="255.27" font-size="6.3" text-anchor="middle" fill="#555" stroke="#555" stroke-width="0.22" transform="rotate(-90 561.5 253)">%</text><text x="787.00" y="364.57" font-size="6.3" text-anchor="middle" fill="#555" stroke="#555" stroke-width="0.22">Date</text><path d="M581.50 297.74C596.43 293.29 603.90 291.06 618.83 286.61C633.76 282.16 641.22 279.93 656.15 275.48C671.09 271.03 678.55 268.80 693.48 264.35C708.41 259.90 721.53 244.92 730.81 253.22C751.39 271.63 748.27 316.32 768.14 331.12C778.13 338.57 789.72 315.91 805.46 308.87C819.58 302.55 834.82 309.63 842.79 297.74C864.68 265.11 858.23 230.21 880.12 197.58" fill="none" stroke="#72c8bb" stroke-width="1.2"/><path d="M880.12 197.58C888.09 185.70 902.51 190.91 917.45 186.46C932.38 182.00 939.84 179.78 954.77 175.33C969.70 170.88 977.17 168.65 992.10 164.20" fill="none" stroke="#45ad52" stroke-width="1.2"/><circle cx="581.50" cy="297.74" r="2.35" fill="#0a7d6c"/><circle cx="618.83" cy="286.61" r="2.35" fill="#0a7d6c"/><circle cx="656.15" cy="275.48" r="2.35" fill="#0a7d6c"/><circle cx="693.48" cy="264.35" r="2.35" fill="#0a7d6c"/><circle cx="730.81" cy="253.22" r="2.35" fill="#0a7d6c"/><circle cx="768.14" cy="331.12" r="2.35" fill="#0a7d6c"/><circle cx="805.46" cy="308.87" r="2.35" fill="#0a7d6c"/><circle cx="842.79" cy="297.74" r="2.35" fill="#0a7d6c"/><circle cx="880.12" cy="197.58" r="2.35" fill="#3aab47"/><circle cx="917.45" cy="186.46" r="2.35" fill="#3aab47"/><circle cx="954.77" cy="175.33" r="2.35" fill="#3aab47"/><circle cx="992.10" cy="164.20" r="2.35" fill="#3aab47"/><path d="M581.5 219.84H992.1" stroke="#f5405c" stroke-width="1.1"/><rect x="978.70" y="214.14" width="11.4" height="11.8" rx="3.2" fill="#3a3a3a" fill-opacity="0.9"/><text x="984.40" y="222.38" font-size="6.5" text-anchor="middle" fill="#fff" font-weight="bold">85</text><rect x="710.06" y="374.15" width="21.2" height="6.5" rx="0" fill="#0a7d6c" stroke="#0a7d6c" stroke-width="0.9"/><text x="734.36" y="379.67" font-size="6.3" text-anchor="start" fill="#2a2a2a" stroke="#2a2a2a" stroke-width="0.22">Availability, %</text><rect x="777.84" y="374.15" width="21.2" height="6.5" rx="0" fill="#fb0828" stroke="#fb0828" stroke-width="0.9"/><text x="802.14" y="379.67" font-size="6.3" text-anchor="start" fill="#2a2a2a" stroke="#2a2a2a" stroke-width="0.22">Availability Target</text></g></svg></div><div class="abs" style="left:1016.6px;top:404.8px;width:4px;height:4px;border-right:1px solid #444;border-bottom:1px solid #444"></div>
<div class="card" style="left:64.3px;top:418px;width:467.4px;height:298px"><div class="ch"><div class="ct" style="letter-spacing:0.2px">Downtime</div><div class="dots"><svg width="4" height="10" viewBox="0 0 4 10"><rect x="0.900" y="0.3" width="2.200" height="2.200" rx="0.500" fill="#161616"/><rect x="0.900" y="3.4" width="2.200" height="2.200" rx="0.500" fill="#161616"/><rect x="0.900" y="6.5" width="2.200" height="2.200" rx="0.500" fill="#161616"/></svg></div></div><svg class="abs" style="left:0;top:0" width="468" height="330"><g transform="translate(-64.3,-418)"><text x="298.30" y="470.31" font-size="8.35" text-anchor="middle" fill="#555" font-weight="bold">Downtime</text><path d="M95.30 477.90H523.00" stroke="#dddde6" stroke-width="0.6"/><path d="M95.30 513.60H523.00" stroke="#dddde6" stroke-width="0.6"/><path d="M95.30 549.30H523.00" stroke="#dddde6" stroke-width="0.6"/><path d="M95.30 585.00H523.00" stroke="#dddde6" stroke-width="0.6"/><path d="M95.30 620.70H523.00" stroke="#dddde6" stroke-width="0.6"/><path d="M95.30 656.40H523.00" stroke="#dddde6" stroke-width="0.6"/><path d="M99.30 477.90V660.40" stroke="#dddde6" stroke-width="0.6"/><text x="93.00" y="480.47" font-size="6.3" text-anchor="end" fill="#555" stroke="#555" stroke-width="0.22">25</text><text x="93.00" y="516.17" font-size="6.3" text-anchor="end" fill="#555" stroke="#555" stroke-width="0.22">20</text><text x="93.00" y="551.87" font-size="6.3" text-anchor="end" fill="#555" stroke="#555" stroke-width="0.22">15</text><text x="93.00" y="587.57" font-size="6.3" text-anchor="end" fill="#555" stroke="#555" stroke-width="0.22">10</text><text x="93.00" y="623.27" font-size="6.3" text-anchor="end" fill="#555" stroke="#555" stroke-width="0.22">5</text><text x="93.00" y="658.97" font-size="6.3" text-anchor="end" fill="#555" stroke="#555" stroke-width="0.22">0</text><rect x="104.32" y="499.32" width="25.27" height="64.26" fill="rgba(255,149,68,0.5)" stroke="rgba(250,140,70,0.55)" stroke-width="0.6"/><rect x="104.32" y="563.58" width="25.27" height="92.82" fill="rgba(36,180,249,0.5)" stroke="rgba(40,140,220,0.75)" stroke-width="0.7"/><text x="116.95" y="667.87" font-size="6.3" text-anchor="middle" fill="#555" stroke="#555" stroke-width="0.22">2024-01</text><rect x="139.63" y="506.46" width="25.27" height="71.40" fill="rgba(255,149,68,0.5)" stroke="rgba(250,140,70,0.55)" stroke-width="0.6"/><rect x="139.63" y="577.86" width="25.27" height="78.54" fill="rgba(36,180,249,0.5)" stroke="rgba(40,140,220,0.75)" stroke-width="0.7"/><text x="152.26" y="667.87" font-size="6.3" text-anchor="middle" fill="#555" stroke="#555" stroke-width="0.22">2024-02</text><rect x="174.93" y="513.60" width="25.27" height="57.12" fill="rgba(255,149,68,0.5)" stroke="rgba(250,140,70,0.55)" stroke-width="0.6"/><rect x="174.93" y="570.72" width="25.27" height="85.68" fill="rgba(36,180,249,0.5)" stroke="rgba(40,140,220,0.75)" stroke-width="0.7"/><text x="187.57" y="667.87" font-size="6.3" text-anchor="middle" fill="#555" stroke="#555" stroke-width="0.22">2024-03</text><rect x="210.24" y="520.74" width="25.27" height="49.98" fill="rgba(255,149,68,0.5)" stroke="rgba(250,140,70,0.55)" stroke-width="0.6"/><rect x="210.24" y="570.72" width="25.27" height="85.68" fill="rgba(36,180,249,0.5)" stroke="rgba(40,140,220,0.75)" stroke-width="0.7"/><text x="222.88" y="667.87" font-size="6.3" text-anchor="middle" fill="#555" stroke="#555" stroke-width="0.22">2024-04</text><rect x="245.55" y="527.88" width="25.27" height="57.12" fill="rgba(255,149,68,0.5)" stroke="rgba(250,140,70,0.55)" stroke-width="0.6"/><rect x="245.55" y="585.00" width="25.27" height="71.40" fill="rgba(36,180,249,0.5)" stroke="rgba(40,140,220,0.75)" stroke-width="0.7"/><text x="258.19" y="667.87" font-size="6.3" text-anchor="middle" fill="#555" stroke="#555" stroke-width="0.22">2024-05</text><rect x="280.86" y="485.04" width="25.27" height="78.54" fill="rgba(255,149,68,0.5)" stroke="rgba(250,140,70,0.55)" stroke-width="0.6"/><rect x="280.86" y="563.58" width="25.27" height="92.82" fill="rgba(36,180,249,0.5)" stroke="rgba(40,140,220,0.75)" stroke-width="0.7"/><text x="293.50" y="667.87" font-size="6.3" text-anchor="middle" fill="#555" stroke="#555" stroke-width="0.22">2024-06</text><rect x="316.17" y="485.04" width="25.27" height="64.26" fill="rgba(255,149,68,0.5)" stroke="rgba(250,140,70,0.55)" stroke-width="0.6"/><rect x="316.17" y="549.30" width="25.27" height="107.10" fill="rgba(36,180,249,0.5)" stroke="rgba(40,140,220,0.75)" stroke-width="0.7"/><text x="328.80" y="667.87" font-size="6.3" text-anchor="middle" fill="#555" stroke="#555" stroke-width="0.22">2024-07</text><rect x="351.48" y="499.32" width="25.27" height="64.26" fill="rgba(255,149,68,0.5)" stroke="rgba(250,140,70,0.55)" stroke-width="0.6"/><rect x="351.48" y="563.58" width="25.27" height="92.82" fill="rgba(36,180,249,0.5)" stroke="rgba(40,140,220,0.75)" stroke-width="0.7"/><text x="364.11" y="667.87" font-size="6.3" text-anchor="middle" fill="#555" stroke="#555" stroke-width="0.22">2024-08</text><rect x="386.78" y="563.58" width="25.27" height="42.84" fill="rgba(255,149,68,0.5)" stroke="rgba(250,140,70,0.55)" stroke-width="0.6"/><rect x="386.78" y="606.42" width="25.27" height="49.98" fill="rgba(36,180,249,0.5)" stroke="rgba(40,140,220,0.75)" stroke-width="0.7"/><text x="399.42" y="667.87" font-size="6.3" text-anchor="middle" fill="#555" stroke="#555" stroke-width="0.22">2024-09</text><rect x="422.09" y="570.72" width="25.27" height="35.70" fill="rgba(255,149,68,0.5)" stroke="rgba(250,140,70,0.55)" stroke-width="0.6"/><rect x="422.09" y="606.42" width="25.27" height="49.98" fill="rgba(36,180,249,0.5)" stroke="rgba(40,140,220,0.75)" stroke-width="0.7"/><text x="434.73" y="667.87" font-size="6.3" text-anchor="middle" fill="#555" stroke="#555" stroke-width="0.22">2024-10</text><rect x="457.40" y="577.86" width="25.27" height="35.70" fill="rgba(255,149,68,0.5)" stroke="rgba(250,140,70,0.55)" stroke-width="0.6"/><rect x="457.40" y="613.56" width="25.27" height="42.84" fill="rgba(36,180,249,0.5)" stroke="rgba(40,140,220,0.75)" stroke-width="0.7"/><text x="470.04" y="667.87" font-size="6.3" text-anchor="middle" fill="#555" stroke="#555" stroke-width="0.22">2024-11</text><rect x="492.71" y="585.00" width="25.27" height="35.70" fill="rgba(255,149,68,0.5)" stroke="rgba(250,140,70,0.55)" stroke-width="0.6"/><rect x="492.71" y="620.70" width="25.27" height="35.70" fill="rgba(36,180,249,0.5)" stroke="rgba(40,140,220,0.75)" stroke-width="0.7"/><text x="505.35" y="667.87" font-size="6.3" text-anchor="middle" fill="#555" stroke="#555" stroke-width="0.22">2024-12</text><text x="311.60" y="679.17" font-size="6.3" text-anchor="middle" fill="#555" stroke="#555" stroke-width="0.22">Date</text><rect x="205.69" y="688.25" width="21.8" height="6.5" rx="0" fill="#8ed4fa" stroke="#5fb5e6" stroke-width="0.9"/><text x="230.59" y="693.77" font-size="6.3" text-anchor="start" fill="#555" stroke="#555" stroke-width="0.22">Planned downtime, %</text><rect x="296.72" y="688.25" width="21.8" height="6.5" rx="0" fill="#fbc5a0" stroke="#f6b48c" stroke-width="0.9"/><text x="321.62" y="693.77" font-size="6.3" text-anchor="start" fill="#555" stroke="#555" stroke-width="0.22">Unplanned downtime, %</text></g></svg></div>
<div class="card" style="left:546.6px;top:418px;width:467.4px;height:320px"><div class="ch"><div class="ct" style="letter-spacing:0.135px">Perfomance (Ideal ProductionTime/Actual Run Time)</div><div class="dots"><svg width="4" height="10" viewBox="0 0 4 10"><rect x="0.900" y="0.3" width="2.200" height="2.200" rx="0.500" fill="#161616"/><rect x="0.900" y="3.4" width="2.200" height="2.200" rx="0.500" fill="#161616"/><rect x="0.900" y="6.5" width="2.200" height="2.200" rx="0.500" fill="#161616"/></svg></div></div><svg class="abs" style="left:0;top:0" width="468" height="330"><g transform="translate(-546.6,-418)"><text x="780.50" y="470.51" font-size="8.35" text-anchor="middle" fill="#111" font-weight="bold">Performance</text><path d="M577.50 478.00H992.10" stroke="#dddde6" stroke-width="0.6"/><path d="M577.50 498.70H992.10" stroke="#dddde6" stroke-width="0.6"/><path d="M577.50 519.40H992.10" stroke="#dddde6" stroke-width="0.6"/><path d="M577.50 540.10H992.10" stroke="#dddde6" stroke-width="0.6"/><path d="M577.50 560.80H992.10" stroke="#dddde6" stroke-width="0.6"/><path d="M577.50 581.50H992.10" stroke="#dddde6" stroke-width="0.6"/><path d="M581.50 478.00V585.50" stroke="#dddde6" stroke-width="0.6"/><path d="M618.83 478.00V585.50" stroke="#dddde6" stroke-width="0.6"/><path d="M656.15 478.00V585.50" stroke="#dddde6" stroke-width="0.6"/><path d="M693.48 478.00V585.50" stroke="#dddde6" stroke-width="0.6"/><path d="M730.81 478.00V585.50" stroke="#dddde6" stroke-width="0.6"/><path d="M768.14 478.00V585.50" stroke="#dddde6" stroke-width="0.6"/><path d="M805.46 478.00V585.50" stroke="#dddde6" stroke-width="0.6"/><path d="M842.79 478.00V585.50" stroke="#dddde6" stroke-width="0.6"/><path d="M880.12 478.00V585.50" stroke="#dddde6" stroke-width="0.6"/><path d="M917.45 478.00V585.50" stroke="#dddde6" stroke-width="0.6"/><path d="M954.77 478.00V585.50" stroke="#dddde6" stroke-width="0.6"/><path d="M992.10 478.00V585.50" stroke="#dddde6" stroke-width="0.6"/><text x="576.00" y="480.57" font-size="6.3" text-anchor="end" fill="#2a2a2a" stroke="#2a2a2a" stroke-width="0.22">90</text><text x="576.00" y="501.27" font-size="6.3" text-anchor="end" fill="#2a2a2a" stroke="#2a2a2a" stroke-width="0.22">85</text><text x="576.00" y="521.97" font-size="6.3" text-anchor="end" fill="#2a2a2a" stroke="#2a2a2a" stroke-width="0.22">80</text><text x="576.00" y="542.67" font-size="6.3" text-anchor="end" fill="#2a2a2a" stroke="#2a2a2a" stroke-width="0.22">75</text><text x="576.00" y="563.37" font-size="6.3" text-anchor="end" fill="#2a2a2a" stroke="#2a2a2a" stroke-width="0.22">70</text><text x="576.00" y="584.07" font-size="6.3" text-anchor="end" fill="#2a2a2a" stroke="#2a2a2a" stroke-width="0.22">65</text><text x="581.50" y="592.27" font-size="6.3" text-anchor="middle" fill="#2a2a2a" stroke="#2a2a2a" stroke-width="0.22">2024-01</text><text x="618.83" y="592.27" font-size="6.3" text-anchor="middle" fill="#2a2a2a" stroke="#2a2a2a" stroke-width="0.22">2024-02</text><text x="656.15" y="592.27" font-size="6.3" text-anchor="middle" fill="#2a2a2a" stroke="#2a2a2a" stroke-width="0.22">2024-03</text><text x="693.48" y="592.27" font-size="6.3" text-anchor="middle" fill="#2a2a2a" stroke="#2a2a2a" stroke-width="0.22">2024-04</text><text x="730.81" y="592.27" font-size="6.3" text-anchor="middle" fill="#2a2a2a" stroke="#2a2a2a" stroke-width="0.22">2024-05</text><text x="768.14" y="592.27" font-size="6.3" text-anchor="middle" fill="#2a2a2a" stroke="#2a2a2a" stroke-width="0.22">2024-06</text><text x="805.46" y="592.27" font-size="6.3" text-anchor="middle" fill="#2a2a2a" stroke="#2a2a2a" stroke-width="0.22">2024-07</text><text x="842.79" y="592.27" font-size="6.3" text-anchor="middle" fill="#2a2a2a" stroke="#2a2a2a" stroke-width="0.22">2024-08</text><text x="880.12" y="592.27" font-size="6.3" text-anchor="middle" fill="#2a2a2a" stroke="#2a2a2a" stroke-width="0.22">2024-09</text><text x="917.45" y="592.27" font-size="6.3" text-anchor="middle" fill="#2a2a2a" stroke="#2a2a2a" stroke-width="0.22">2024-10</text><text x="954.77" y="592.27" font-size="6.3" text-anchor="middle" fill="#2a2a2a" stroke="#2a2a2a" stroke-width="0.22">2024-11</text><text x="992.10" y="592.27" font-size="6.3" text-anchor="middle" fill="#2a2a2a" stroke="#2a2a2a" stroke-width="0.22">2024-12</text><text x="561.50" y="531.77" font-size="6.3" text-anchor="middle" fill="#555" stroke="#555" stroke-width="0.22" transform="rotate(-90 561.5 529.5)">%</text><text x="787.00" y="604.07" font-size="6.3" text-anchor="middle" fill="#555" stroke="#555" stroke-width="0.22">Date</text><path d="M581.50 478.00C596.43 481.31 603.72 484.60 618.83 486.28C633.58 487.92 648.17 478.00 656.15 486.28C678.03 514.18 678.83 581.50 693.48 581.50C708.69 580.66 708.75 512.72 730.81 482.14C738.61 478.00 753.21 478.00 768.14 478.00C783.07 478.00 790.49 481.31 805.46 482.14C820.35 482.97 835.02 478.00 842.79 482.14C864.88 511.54 865.46 581.50 880.12 581.50C895.32 580.66 895.15 508.91 917.45 478.00C925.01 478.00 939.89 478.00 954.77 478.00C969.75 478.83 977.17 480.48 992.10 482.14" fill="none" stroke="#c97fd1" stroke-width="1.25"/><circle cx="581.50" cy="478.00" r="2.3" fill="#8e2b9b"/><circle cx="618.83" cy="486.28" r="2.3" fill="#8e2b9b"/><circle cx="656.15" cy="486.28" r="2.3" fill="#8e2b9b"/><circle cx="693.48" cy="581.50" r="2.3" fill="#8e2b9b"/><circle cx="730.81" cy="482.14" r="2.3" fill="#8e2b9b"/><circle cx="768.14" cy="478.00" r="2.3" fill="#8e2b9b"/><circle cx="805.46" cy="482.14" r="2.3" fill="#8e2b9b"/><circle cx="842.79" cy="482.14" r="2.3" fill="#8e2b9b"/><circle cx="880.12" cy="581.50" r="2.3" fill="#8e2b9b"/><circle cx="917.45" cy="478.00" r="2.3" fill="#8e2b9b"/><circle cx="954.77" cy="478.00" r="2.3" fill="#8e2b9b"/><circle cx="992.10" cy="482.14" r="2.3" fill="#8e2b9b"/><rect x="745.77" y="612.55" width="21.2" height="6.5" rx="0" fill="#8e2b9b" stroke="#8e2b9b" stroke-width="0.9"/><text x="770.07" y="618.07" font-size="6.3" text-anchor="start" fill="#2a2a2a" stroke="#2a2a2a" stroke-width="0.22">Performance, %</text></g></svg><svg class="abs" style="left:0;top:0" width="468" height="330"><g transform="translate(-546.6,-418)"><g transform="translate(560,641.1)"><svg width="12" height="12" viewBox="0 0 24 24"><path fill="#222" d="M19 6.410L17.590 5 12 10.590 6.410 5 5 6.410 10.590 12 5 17.590 6.410 19 12 13.410 17.590 19 19 17.590 13.410 12z"/></svg></g><text x="780.30" y="675.01" font-size="8.35" text-anchor="middle" fill="#111" font-weight="bold">Performance Losses</text><rect x="689.87" y="687.35" width="21.2" height="6.5" rx="1" fill="#f6e880" stroke="#4a4a3a" stroke-width="0.9"/><text x="714.17" y="692.87" font-size="6.3" text-anchor="start" fill="#2a2a2a" stroke="#2a2a2a" stroke-width="0.22">Reduced Operating Speed, %</text><rect x="803.07" y="687.35" width="21.2" height="6.5" rx="1" fill="#f8b877" stroke="#4a4a3a" stroke-width="0.9"/><text x="827.37" y="692.87" font-size="6.3" text-anchor="start" fill="#2a2a2a" stroke="#2a2a2a" stroke-width="0.22">Micro Stops, %</text><path d="M573.5 699.5H1005" stroke="#dddde6" stroke-width="0.6"/><text x="572.30" y="701.77" font-size="6.3" text-anchor="end" fill="#2a2a2a" stroke="#2a2a2a" stroke-width="0.22">6</text><path d="M573.5 712.6H1005" stroke="#dddde6" stroke-width="0.6"/><text x="572.30" y="714.87" font-size="6.3" text-anchor="end" fill="#2a2a2a" stroke="#2a2a2a" stroke-width="0.22">5</text><path d="M578.1 699.5V722" stroke="#dddde6" stroke-width="0.6"/><path d="M689.600 722V714q0-2.3 2.3-2.3h7.400q2.3 0 2.3 2.300V722z" fill="#f6e880" stroke="#4a4a3a" stroke-width="0.7"/></g></svg></div>
</div></body></html>
